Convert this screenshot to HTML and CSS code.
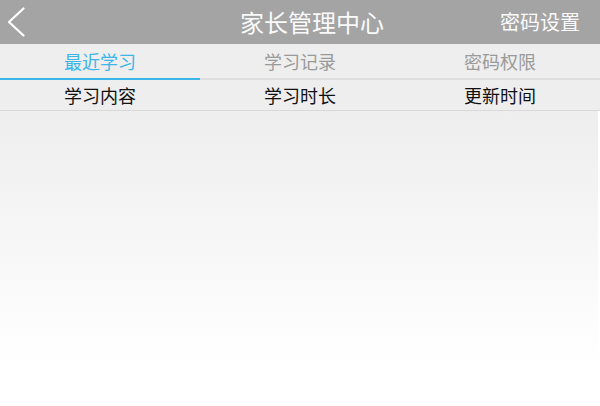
FILE: index.html
```html
<!DOCTYPE html>
<html lang="zh-CN">
<head>
<meta charset="utf-8">
<title>家长管理中心</title>
<link rel="stylesheet" href="styles.css">
</head>
<body>
<div class="page">
  <header class="topbar">
    <div class="back">
      <svg width="18" height="30" viewBox="0 0 18 30" aria-hidden="true">
        <polyline points="16.5,1.5 2,15 16.5,28.5" fill="none" stroke="#ffffff" stroke-width="2.2" stroke-linecap="round" stroke-linejoin="round"/>
      </svg>
    </div>
    <h1 class="title">家长管理中心</h1>
    <div class="action">密码设置</div>
  </header>
  <nav class="tabs">
    <div class="tab active">最近学习</div>
    <div class="tab">学习记录</div>
    <div class="tab">密码权限</div>
  </nav>
  <div class="cols">
    <div class="col">学习内容</div>
    <div class="col">学习时长</div>
    <div class="col">更新时间</div>
  </div>
  <main class="content"></main>
</div>
</body>
</html>
```
FILE: styles.css
```css
html, body {
  margin: 0;
  padding: 0;
  background: #ffffff;
}
body {
  font-family: "Noto Sans CJK SC", "Noto Sans", sans-serif;
  width: 600px;
  height: 406px;
  overflow: hidden;
}
.page {
  display: flex;
  flex-direction: column;
  height: 406px;
}
.topbar {
  height: 44px;
  background: #a4a4a4;
  display: flex;
  align-items: center;
  color: #ffffff;
}
.back {
  width: 124px;
  padding-left: 7px;
  box-sizing: border-box;
  display: flex;
  align-items: center;
}
.back svg {
  display: block;
}
.title {
  flex: 1;
  margin: 0;
  text-align: center;
  font-size: 24px;
  font-weight: 400;
  line-height: 44px;
  color: #fafafa;
}
.action {
  width: 100px;
  padding-right: 20px;
  box-sizing: border-box;
  text-align: right;
  font-size: 20px;
  line-height: 44px;
  color: #fafafa;
}
.tabs {
  display: grid;
  grid-template-columns: 200px 200px 200px;
  background: #eeeeee;
}
.tab {
  height: 34px;
  line-height: 34px;
  text-align: center;
  font-size: 18px;
  color: #9a9a9a;
  border-bottom: 2px solid #dedede;
}
.tab.active {
  color: #3cb6e8;
  border-bottom-color: #3cb6e8;
}
.cols {
  display: grid;
  grid-template-columns: 200px 200px 200px;
  background: #eeeeee;
  border-bottom: 1px solid #d9d9d9;
}
.col {
  height: 30px;
  line-height: 30px;
  text-align: center;
  font-size: 18px;
  color: #111111;
}
.content {
  flex: 1;
  margin-right: 2px;
  background: linear-gradient(to bottom, #eeeeee 0px, #ffffff 254px, #ffffff 100%);
}
```
